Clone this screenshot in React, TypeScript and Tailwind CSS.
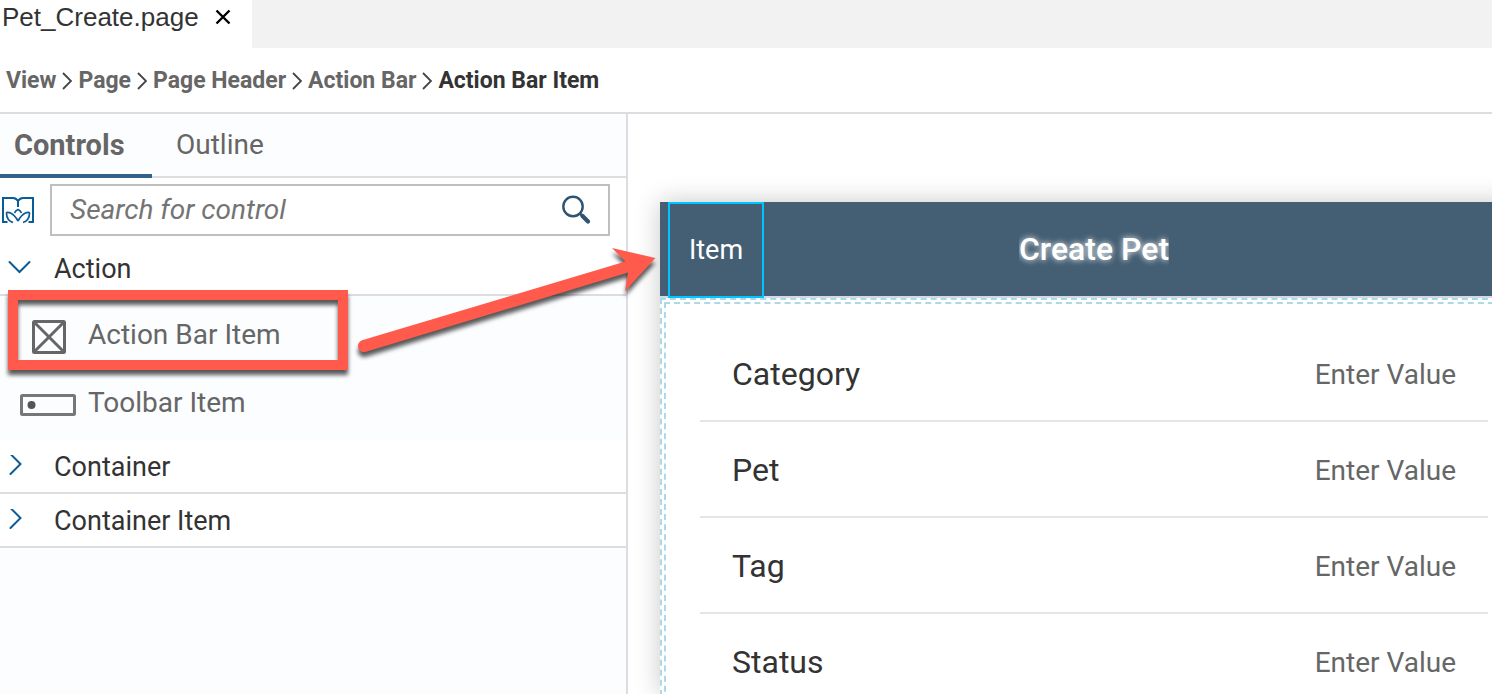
import { Fragment } from "react";

const crumbs = ["View", "Page", "Page Header", "Action Bar", "Action Bar Item"];
const fields = ["Category", "Pet", "Tag", "Status"];

function Chevron({ open }: { open: boolean }) {
  return (
    <svg
      viewBox="0 0 24 24"
      className="size-6 shrink-0"
      fill="none"
      stroke="#0a5c96"
      strokeWidth="2"
      strokeLinecap="round"
      aria-hidden="true"
    >
      {open ? <path d="M1.500 5 L11.500 15 L21.500 5" /> : <path d="M2.500 -1 L12.500 9 L2.500 19" overflow="visible" />}
    </svg>
  );
}

function GroupHeader({ label, open = false }: { label: string; open?: boolean }) {
  return (
    <button
      type="button"
      aria-expanded={open}
      className="flex h-[54px] w-full items-center gap-[22px] border-b-2 border-[#dcdce1] bg-white pt-0.5 pl-2 text-left text-[27px] leading-8 text-[#333333]"
    >
      <Chevron open={open} />
      {label}
    </button>
  );
}

function LibraryIcon() {
  return (
    <svg viewBox="0 0 34 28" className="h-7 w-[34px] shrink-0" fill="none" stroke="#0a5c96" strokeWidth="2" aria-hidden="true">
      <path d="M7.500 26 H3 V2 H13 Q16 2 18 5 Q20 2 23 2 H33 V26 H28.500" />
      <path d="M18 4 V11" />
      <path d="M14.500 17 Q15.500 14.500 18 13.500 Q20.500 14.500 21.500 17" strokeWidth="1.7" />
      <path d="M18 25 C13 16 7 15.500 6.500 17 C6.500 21 8.500 25 13 26.500" strokeWidth="1.7" />
      <path d="M18 25 C23 16 29 15.500 29.500 17 C29.500 21 27.500 25 23 26.500" strokeWidth="1.7" />
    </svg>
  );
}

function SidePanel() {
  return (
    <aside className="relative w-[628px] shrink-0 border-r-2 border-[#dcdce1] bg-[#fcfdff]">
      <div role="tablist" className="flex h-16 border-b-2 border-[#dcdce1] text-[28px] leading-8 text-[#666666]">
        <button
          type="button"
          role="tab"
          aria-selected="true"
          className="-mb-0.5 w-[152px] border-b-4 border-[#346187] pt-0.5 pl-3.5 text-left text-[29px] font-bold"
        >
          Controls
        </button>
        <button type="button" role="tab" aria-selected="false" className="px-6">
          Outline
        </button>
      </div>

      <div className="flex h-16 items-center gap-4 bg-white pr-4">
        <button type="button" aria-label="Control library">
          <LibraryIcon />
        </button>
        <label className="flex h-[52px] flex-1 items-center border-2 border-[#bfbfbf] bg-white pr-[17px] pl-[18px]">
          <input
            type="text"
            aria-label="Search for control"
            placeholder="Search for control"
            className="min-w-0 flex-1 bg-transparent text-[28px] leading-8 italic outline-none placeholder:text-[#747474]"
          />
          <svg viewBox="0 0 30 30" className="size-[30px]" fill="none" stroke="#2f5372" aria-hidden="true">
            <circle cx="12" cy="11.500" r="9.700" strokeWidth="2.400" />
            <path d="M18.500 18 L21 20.500" strokeWidth="2.500" />
            <path d="M21.500 21 L27 26.500" strokeWidth="4.200" strokeLinecap="round" />
          </svg>
        </label>
      </div>

      <GroupHeader label="Action" open />
      <ul className="py-1 text-[28px] leading-8 text-[#666666]">
        <li className="flex h-[68px] items-center pt-0.5 pl-5">
          <span className="flex w-[68px] pl-3">
            <svg viewBox="0 0 34 34" className="mt-1 size-[34px]" fill="none" stroke="#666666" aria-hidden="true">
              <rect x="1.500" y="1.500" width="31" height="31" rx="1" strokeWidth="3" />
              <path d="M2 2 L32 32 M32 2 L2 32" strokeWidth="3" />
            </svg>
          </span>
          Action Bar Item
        </li>
        <li className="flex h-[68px] items-center pt-0.5 pl-5">
          <span className="flex w-[68px]">
            <svg viewBox="0 0 56 22" className="mt-1 h-[22px] w-14" fill="none" stroke="#777777" aria-hidden="true">
              <rect x="1.500" y="1.500" width="53" height="19" rx="1" strokeWidth="3" />
              <circle cx="11.500" cy="11" r="4" fill="#555555" stroke="none" />
            </svg>
          </span>
          Toolbar Item
        </li>
      </ul>
      <GroupHeader label="Container" />
      <GroupHeader label="Container Item" />

      <svg
        viewBox="0 0 680 300"
        className="pointer-events-none absolute top-[126px] left-0 z-10 h-[300px] w-[680px] [filter:drop-shadow(0px_5px_2px_rgba(0,0,0,0.65))]"
        aria-hidden="true"
      >
        <rect x="13" y="55" width="330" height="70" fill="none" stroke="#ff5a4b" strokeWidth="10" />
        <path
          d="M362 100.300 L625.500 21.500 L612 8 L655.500 18 L625 51 L628 32.500 L366 111.700 A6 6 0 0 1 362 100.300 Z"
          fill="#ff5a4b"
        />
      </svg>
    </aside>
  );
}

function PagePreview() {
  return (
    <main className="flex min-w-0 flex-1 overflow-hidden bg-white pt-[88px] pl-8">
      <section className="-mr-9 flex flex-1 flex-col bg-white shadow-[0_0_24px_rgba(0,0,0,0.22)]">
        <header className="grid h-24 grid-cols-[1fr_auto_1fr] items-center border-b-2 border-[#d1dbe8] bg-[#445e73] text-white">
          <button
            type="button"
            className="-mb-0.5 ml-2 h-24 w-24 border-2 border-[#00c3ff] text-[27px] leading-8"
          >
            Item
          </button>
          <h1 className="overflow-hidden text-[32px] leading-9 font-medium [text-shadow:0_0_6px_#ffffff]">Create Pet</h1>
        </header>
        <div className="flex flex-1 flex-col border-2 border-dashed border-[#add8e6] p-0.5">
          <div className="flex-1 border-2 border-dashed border-[#add8e6] px-[34px] pt-[22px]">
            {fields.map((name) => (
              <label
                key={name}
                className="flex h-24 items-center justify-between border-b-2 border-[#e5e5e5] px-8 pt-0.5 text-[32px] leading-10 text-[#333333]"
              >
                {name}
                <input
                  type="text"
                  placeholder="Enter Value"
                  className="w-60 pt-0.5 text-right text-[28px] leading-8 outline-none placeholder:text-[#666666]"
                />
              </label>
            ))}
          </div>
        </div>
      </section>
    </main>
  );
}

export default function App() {
  return (
    <div className="flex h-screen flex-col overflow-hidden bg-white font-[Roboto,'Liberation_Sans',sans-serif]">
      <div className="flex h-12 shrink-0 bg-[#f2f2f2]">
        <div className="flex w-[252px] items-center gap-4 bg-white pb-3.5 pl-0.5 font-['Liberation_Sans',Arial,sans-serif] text-[26px] leading-8 text-[#333333]">
          Pet_Create.page
          <button type="button" aria-label="Close tab">
            <svg viewBox="0 0 16 16" className="size-4" fill="none" stroke="#000000" strokeWidth="2.4" aria-hidden="true">
              <path d="M1.500 1.500 L14.500 14.500 M14.500 1.500 L1.500 14.500" />
            </svg>
          </button>
        </div>
      </div>

      <nav
        aria-label="Breadcrumb"
        className="flex h-[66px] shrink-0 items-center gap-1.5 border-b-2 border-[#dcdce1] pt-0.5 pl-1.5 text-[23px] leading-7 font-bold text-[#666666]"
      >
        {crumbs.map((crumb, i) => (
          <Fragment key={crumb}>
            {i > 0 && (
              <svg viewBox="0 0 10 18" className="h-[18px] w-2.5" fill="none" stroke="#444444" strokeWidth="1.8" aria-hidden="true">
                <path d="M1 1 L9 9 L1 17" />
              </svg>
            )}
            {i === crumbs.length - 1 ? (
              <span aria-current="page" className="text-[#333333]">
                {crumb}
              </span>
            ) : (
              <a href="#">{crumb}</a>
            )}
          </Fragment>
        ))}
      </nav>

      <div className="flex min-h-0 flex-1">
        <SidePanel />
        <PagePreview />
      </div>
    </div>
  );
}
